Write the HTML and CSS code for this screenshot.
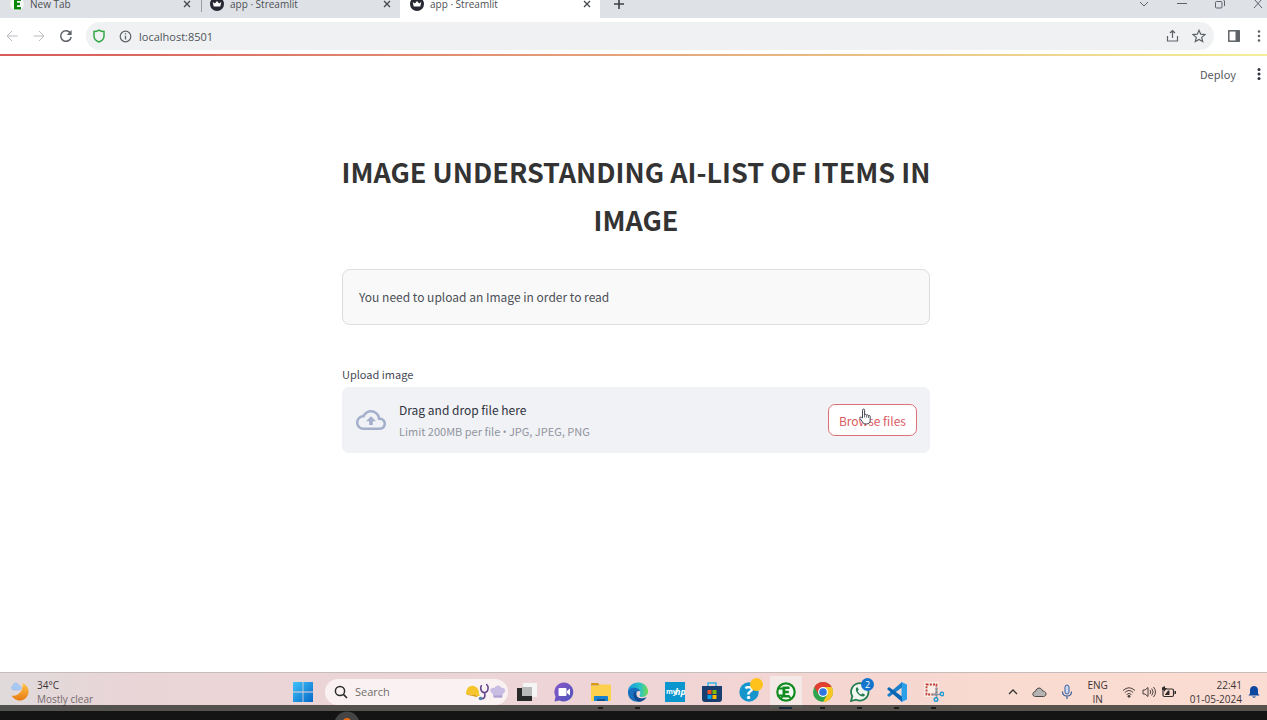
FILE: index.html
```html
<!DOCTYPE html>
<html lang="en">
<head>
<meta charset="utf-8">
<meta name="viewport" content="width=device-width, initial-scale=1">
<title>app · Streamlit</title>
<link rel="stylesheet" href="styles.css">
</head>
<body>
<header class="browser">
  <div class="tabstrip">
    <div class="tab">
      <svg class="favicon" viewBox="0 0 14 14"><circle cx="7" cy="7" r="6.8" fill="#f4fbf4"/><path d="M4 1.500h7v2.600H7v1.600h3v2.600H7v1.600h4v2.600H4z" fill="#0c870c"/></svg>
      <span class="tab-title">New Tab</span>
      <button class="tab-close" aria-label="Close New Tab"><svg viewBox="0 0 8 8"><path d="M1 1l6 6M7 1l-6 6"/></svg></button>
    </div>
    <div class="tab tab-divided">
      <svg class="favicon" viewBox="0 0 14 14"><circle cx="7" cy="7" r="7" fill="#262730"/><path d="M2.700 5l2.200 1.500L7 4l2.100 2.500L11.300 5l-1 4.500H3.700z" fill="#fff"/></svg>
      <span class="tab-title">app · Streamlit</span>
      <button class="tab-close" aria-label="Close app"><svg viewBox="0 0 8 8"><path d="M1 1l6 6M7 1l-6 6"/></svg></button>
    </div>
    <div class="tab tab-active">
      <svg class="favicon" viewBox="0 0 14 14"><circle cx="7" cy="7" r="7" fill="#262730"/><path d="M2.700 5l2.200 1.500L7 4l2.100 2.500L11.300 5l-1 4.500H3.700z" fill="#fff"/></svg>
      <span class="tab-title">app · Streamlit</span>
      <button class="tab-close" aria-label="Close current tab"><svg viewBox="0 0 8 8"><path d="M1 1l6 6M7 1l-6 6"/></svg></button>
    </div>
    <button class="new-tab" aria-label="New tab"><svg width="10" height="10" viewBox="0 0 10 10"><path d="M5 0v10M0 5h10"/></svg></button>
    <div class="window-controls">
      <button aria-label="Search tabs"><svg width="10" height="10" viewBox="0 0 10 10"><path d="M1 3l4 4 4-4"/></svg></button>
      <button aria-label="Minimize"><svg width="10" height="10" viewBox="0 0 10 10"><path d="M0 4.500h10"/></svg></button>
      <button aria-label="Restore"><svg width="10" height="10" viewBox="0 0 10 10"><rect x=".5" y="2.500" width="6.500" height="6.500" rx="1"/><path d="M3 .5h5l1.500 1.500v5"/></svg></button>
      <button aria-label="Close window"><svg width="10" height="10" viewBox="0 0 10 10"><path d="M1 0l8 9M9 0L1 9"/></svg></button>
    </div>
  </div>
  <div class="toolbar">
    <button class="tool faded" aria-label="Back"><svg width="12" height="12" viewBox="0 0 12 12"><path d="M11.500 6H1M6 1L1 6l5 5"/></svg></button>
    <button class="tool faded" aria-label="Forward"><svg width="12" height="12" viewBox="0 0 12 12"><path d="M.5 6H11M6 1l5 5-5 5"/></svg></button>
    <button class="tool" aria-label="Reload"><svg width="14" height="14" viewBox="0 0 14 14"><path d="M11.500 4.200A5.300 5.300 0 1 0 12.200 8" stroke-width="1.500"/><path d="M12.600 1v5H7.800z" fill="#5f6368" stroke="none"/></svg></button>
    <div class="omnibox">
      <svg width="14" height="14" viewBox="0 0 14 14"><path d="M7 1.200C5.300 2.300 3.600 2.600 2 2.600V7c0 3 2.200 5 5 6 2.800-1 5-3 5-6V2.600C10.400 2.600 8.700 2.300 7 1.200z" stroke="#35a845" stroke-width="1.500"/></svg>
      <svg width="13" height="13" viewBox="0 0 13 13"><circle cx="6.500" cy="6.500" r="5.300" stroke-width="1.200"/><path d="M6.500 5.700v3.700M6.500 3.300v1.300" stroke-width="1.300"/></svg>
      <input class="address" aria-label="Address" value="localhost:8501">
      <button class="tool" aria-label="Share"><svg width="13" height="14" viewBox="0 0 13 14"><path d="M6.500 9V1.700M4 4l2.500-2.500L9 4M1.500 7v5h10V7" stroke-width="1.200"/></svg></button>
      <button class="tool" aria-label="Bookmark"><svg width="14" height="14" viewBox="0 0 14 14"><path d="M7 1.300l1.700 3.900 4.200.4-3.200 2.800 1 4.200L7 10.400l-3.700 2.200 1-4.200L1.100 5.600l4.200-.4z" stroke-width="1.200"/></svg></button>
    </div>
    <button class="tool" aria-label="Side panel"><svg width="12" height="12" viewBox="0 0 12 12"><rect x=".8" y=".8" width="10.400" height="10.400" stroke-width="1.500"/><path d="M7.500 1h4v10h-4z" fill="#5f6368" stroke="none"/></svg></button>
    <button class="tool" aria-label="Browser menu"><svg width="4" height="14" viewBox="0 0 4 14"><g fill="#5f6368" stroke="none"><circle cx="2" cy="2.500" r="1.300"/><circle cx="2" cy="7" r="1.300"/><circle cx="2" cy="11.500" r="1.300"/></g></svg></button>
  </div>
</header>

<main class="app">
  <div class="decoration"></div>
  <div class="app-header">
    <button class="deploy">Deploy</button>
    <button class="app-menu" aria-label="App menu"><svg width="4" height="14" viewBox="0 0 4 14"><g fill="#31333f"><circle cx="2" cy="2.500" r="1.500"/><circle cx="2" cy="7" r="1.500"/><circle cx="2" cy="11.500" r="1.500"/></g></svg></button>
  </div>
  <div class="content">
    <h1>IMAGE UNDERSTANDING AI-LIST OF ITEMS IN IMAGE</h1>
    <p class="notice">You need to upload an Image in order to read</p>
    <p class="field-label" id="upload-label">Upload image</p>
    <section class="dropzone" aria-labelledby="upload-label">
      <svg class="cloud" viewBox="0 0 24 24"><path fill="#a3afcb" d="M19.350 10.040A7.490 7.490 0 0 0 12 4C9.110 4 6.600 5.640 5.350 8.040A5.994 5.994 0 0 0 0 14c0 3.310 2.690 6 6 6h13c2.760 0 5-2.240 5-5 0-2.640-2.050-4.780-4.650-4.960zM19 18H6c-2.210 0-4-1.790-4-4s1.790-4 4-4h.710C7.370 7.690 9.480 6 12 6c3.040 0 5.500 2.460 5.500 5.500v.5H19c1.660 0 3 1.340 3 3s-1.340 3-3 3zM8 13h2.550v3h2.900v-3H16l-4-4z"/></svg>
      <div class="drop-text">
        <span class="drop-title">Drag and drop file here</span>
        <small>Limit 200MB per file <span class="bullet">•</span> JPG, JPEG, PNG</small>
      </div>
      <button class="browse">Browse files
        <svg class="pointer" viewBox="0 0 12 17"><path d="M3.500 10V2.200C3.500.6 5.600.6 5.600 2.200V7c.3-1 1.900-.8 2 .3.400-.9 1.800-.6 1.900.5.500-.7 1.700-.4 1.700.8V12c0 2.500-1.200 4-4 4-2.200 0-3-.8-3.900-2.300L.9 10.300c-.5-1 .8-1.700 1.500-1z" fill="#fff" stroke="#44464f"/><path d="M5.600 7v2.500M7.600 7.500v2M9.500 8v2" stroke="#44464f" stroke-width=".8"/></svg>
      </button>
    </section>
  </div>
</main>

<footer>
  <div class="taskbar">
    <div class="weather">
      <svg width="20" height="20" viewBox="0 0 20 20"><defs><linearGradient id="moon" x2="0" y2="1"><stop stop-color="#ffc64a"/><stop offset="1" stop-color="#e87a12"/></linearGradient></defs><path d="M12.500 1a9 9 0 1 1-11 12.500C8 15 13.500 9 12.500 1z" fill="url(#moon)"/><path d="M3 8a2.500 2.500 0 0 1 0-4.500C4 0 8 0 8.500 3.500 12 3.500 12 8 8.500 8z" fill="#a9c9f5" stroke="#8aaee6" stroke-width=".5"/></svg>
      <div class="weather-text"><span>34°C</span><span class="muted">Mostly clear</span></div>
    </div>
    <div class="task-center">
      <button class="task" aria-label="Start"><svg width="20" height="20" viewBox="0 0 20 20"><defs><linearGradient id="win" x2="1" y2="1"><stop stop-color="#3fc3fa"/><stop offset="1" stop-color="#0668c9"/></linearGradient></defs><path d="M0 0h9.600v9.600H0zM10.400 0H20v9.600h-9.600zM0 10.400h9.600V20H0zM10.400 10.400H20V20h-9.600z" fill="url(#win)"/></svg></button>
      <div class="search">
        <svg width="14" height="14" viewBox="0 0 14 14"><circle cx="6" cy="6" r="4.600" fill="none" stroke="#2b2b2b" stroke-width="1.500"/><path d="M9.400 9.400L13 13" stroke="#2b2b2b" stroke-width="1.700"/></svg>
        <input aria-label="Search" placeholder="Search">
        <svg width="40" height="18" viewBox="0 0 40 18"><path d="M1 11C1 3 7 1 11 4c3 2 3 5 3 7l1 1.500-2 .8C9 11 5 12 1 11z" fill="#f6c52c"/><path d="M1 11c4 1 8 0 12 2.300l-2 .7C7 12 3 13 1 11z" fill="#d99b13"/><path d="M17 2.500c-2 0-2 7 2.500 7s4.500-8 1.500-8M19.500 9.500c1.500 6-1.500 6.500-3.500 6" fill="none" stroke="#65458c" stroke-width="1.600"/><circle cx="15.500" cy="15.500" r="1.800" fill="#5384ad"/><path d="M27.500 10.500c-5-3-1-7 2-5.500 1-3.500 6-3.500 7 0 4-1 5 4 1.500 5.500l-1 4h-8z" fill="#c9bde4"/><path d="M28 12.500h9.500l-.5 2h-8z" fill="#ad9ecd"/></svg>
      </div>
      <button class="task" aria-label="Task view"><svg width="20" height="20" viewBox="0 0 20 20"><path d="M6 1h14v14H6z" fill="#f5f5f5"/><path d="M0 6h15v13H0z" fill="#292929"/><path d="M5 5h10v9H5z" fill="#b9b9b9"/></svg></button>
      <button class="task" aria-label="Chat"><svg width="20" height="20" viewBox="0 0 20 20"><defs><linearGradient id="chat" x2="1" y2="1"><stop stop-color="#8a58c9"/><stop offset="1" stop-color="#4b53bd"/></linearGradient></defs><path d="M10 .5a9.500 9.500 0 1 1-4.500 18L.5 19.500l1-5A9.500 9.500 0 0 1 10 .5z" fill="url(#chat)"/><rect x="4.500" y="6" width="8" height="8" rx="1" fill="#fff"/><path d="M13 9l3-2.500v7L13 11z" fill="#fff"/></svg></button>
      <button class="task running" aria-label="File Explorer"><svg width="20" height="20" viewBox="0 0 20 20"><path d="M0 2q0-1 1-1h6l2 2.500H0z" fill="#d89a16"/><path d="M0 4h7l2-1.500h10q1 0 1 1V18q0 1-1 1H0z" fill="#fcd04c"/><path d="M3 19v-4q0-1 1-1h12q1 0 1 1v4z" fill="#1581cf"/><path d="M6 17h8v2H6z" fill="#0d518f"/></svg></button>
      <button class="task running" aria-label="Edge"><svg width="20" height="20" viewBox="0 0 20 20"><defs><linearGradient id="edge" x2="1"><stop stop-color="#1698dc"/><stop offset=".6" stop-color="#2bc3c6"/><stop offset="1" stop-color="#72dd4c"/></linearGradient></defs><path d="M0 9C1-1 17-3 20 8c1 5-3 7-6 7-2 0-3-1-2-3 2-5-7-7-12-3z" fill="url(#edge)"/><path d="M0 9c1-4 11-5 12.300.5C10 8 8 10 8.500 13c.5 4 6 5 10 2C13 23-1 21 0 9z" fill="#176fbd"/><path d="M7 9c-3 4-1 9 4 10.800 3 0 6-2 7.500-4.800-5 3-11 1-10.500-4z" fill="#104a91"/></svg></button>
      <button class="task" aria-label="myHP"><svg width="20" height="20" viewBox="0 0 20 20"><path d="M0 0h20v20H0z" fill="#0b96cf"/><text x="1" y="12" class="hp-small">my</text><text x="10" y="13" class="hp-large">hp</text></svg></button>
      <button class="task" aria-label="Microsoft Store"><svg width="20" height="20" viewBox="0 0 20 20"><path d="M6 5V1h8v4" fill="none" stroke="#37b4e8" stroke-width="1.500"/><path d="M0 4h20v13q0 3-3 3H3q-3 0-3-3z" fill="#193f70"/><path d="M5.500 8h4v4h-4z" fill="#f25022"/><path d="M10.500 8h4v4h-4z" fill="#7fba00"/><path d="M5.500 13h4v4h-4z" fill="#00a4ef"/><path d="M10.500 13h4v4h-4z" fill="#ffb900"/></svg></button>
      <button class="task" aria-label="Help"><svg width="20" height="20" viewBox="0 0 20 20"><circle cx="10" cy="10" r="9.700" fill="#1695cc"/><text x="10" y="17" text-anchor="middle" class="question">?</text></svg><span class="badge badge-yellow"></span></button>
      <button class="task task-active" aria-label="Recorder"><svg width="20" height="20" viewBox="0 0 20 20"><circle cx="10" cy="10" r="8.700" fill="#f4fbf4" stroke="#128b20" stroke-width="2.200"/><path d="M3 6.500h4M3 13.500h4l-2 3M13 14l2 3" fill="none" stroke="#128b20" stroke-width="1.800"/><path d="M6.500 4.500h7V7H9.300v1.800h3.500v2.500H9.300V13h4.200v2.500h-7z" fill="#128b20"/></svg></button>
      <button class="task running" aria-label="Chrome"><svg width="20" height="20" viewBox="0 0 20 20"><circle cx="10" cy="10" r="10" fill="#2da44e"/><path d="M1.340 5A10 10 0 0 1 18.660 5H10L5.700 12.500z" fill="#e23e32"/><path d="M18.660 5A10 10 0 0 1 10 20l4.300-7.500L10 5z" fill="#fbc823"/><circle cx="10" cy="10" r="4.900" fill="#fff"/><circle cx="10" cy="10" r="3.800" fill="#2f76e0"/></svg></button>
      <button class="task running" aria-label="WhatsApp, 2 notifications"><svg width="20" height="20" viewBox="0 0 20 20"><path d="M1 19l1.300-4.700A8.700 8.700 0 1 1 6 17.700z" fill="#f3f7f2" stroke="#237d50" stroke-width="1.800"/><path d="M6.500 5.500C4 8 9 15 13.500 14.500c2-1 1.500-2 .5-2.500l-1.500-.8-1.200 1.300C9.500 12 8 10.200 7.700 9l1-1.300-.8-2q-.4-.8-1.400-.2z" fill="#237d50"/></svg><span class="badge badge-blue">2</span></button>
      <button class="task running" aria-label="Visual Studio Code"><svg width="20" height="20" viewBox="0 0 20 20"><path d="M14.500 0L20 2.500v15L14.500 20z" fill="#2b9fe8"/><path d="M15 0L0 13l2 2L15 5.500z" fill="#1c7fc9"/><path d="M15 20L0 7l2-2 13 9.500z" fill="#0a66b5"/></svg></button>
      <button class="task running" aria-label="Snipping Tool"><svg width="20" height="20" viewBox="0 0 20 20"><rect width="15" height="15" rx="1" fill="#f8ece7"/><path d="M2.500 2.500h10v10h-10z" fill="none" stroke="#c23b2e" stroke-width="1.800" stroke-dasharray="2 1.300"/><path d="M12.500 5.500V16M8 12.500h9" stroke="#85939c" stroke-width="1.700"/><circle cx="12" cy="17.500" r="1.800" fill="none" stroke="#209bd6" stroke-width="1.400"/><circle cx="18" cy="12" r="1.700" fill="none" stroke="#209bd6" stroke-width="1.400"/></svg></button>
    </div>
    <div class="tray">
      <svg width="10" height="10" viewBox="0 0 10 10"><path d="M1 7l4-4 4 4" fill="none" stroke="#333" stroke-width="1.300"/></svg>
      <svg width="15" height="12" viewBox="0 0 15 12"><path d="M3.500 10.500c-4 0-3-5 0-5C4.500 1 9.500 1 10.500 5c4.500 0 4.500 5.500 1 5.500z" fill="#b5b3b2" stroke="#494645"/></svg>
      <svg width="12" height="16" viewBox="0 0 12 16"><rect x="4" y="1" width="4" height="9" rx="2" fill="#cbd8ef" stroke="#385f9e"/><path d="M1.500 7.500c0 6 9 6 9 0M6 12v3" fill="none" stroke="#385f9e" stroke-width="1.200"/></svg>
      <div class="language"><span>ENG</span><span>IN</span></div>
      <div class="status">
        <svg width="14" height="12" viewBox="0 0 14 12"><path d="M1 4.500q6-5.500 12 0M2.800 6.500q4.200-4 8.400 0M4.600 8.500q2.400-2.200 4.800 0" fill="none" stroke="#4a403d"/><circle cx="7" cy="10.300" r="1.400" fill="#4a403d"/></svg>
        <svg width="14" height="12" viewBox="0 0 14 12"><path d="M1 4h2l3-2.500v9L3 8H1zM8 4q1.500 2 0 4M9.700 2.500q3 3.500 0 7M11.500 1q4 5 0 10" fill="none" stroke="#4a403d"/></svg>
        <svg width="14" height="12" viewBox="0 0 14 12"><rect x="1" y="3" width="10.500" height="7.500" rx="1.500" fill="none" stroke="#322c2a" stroke-width="1.200"/><path d="M3 8.500L6 4.500h1.500v4.500H3zM12.500 5H14v3h-1.500zM0 1.500L3 0v2h2L2 6V4H0z" fill="#322c2a"/></svg>
      </div>
      <div class="clock"><time>22:41</time><time>01-05-2024</time></div>
      <svg width="12" height="14" viewBox="0 0 12 14"><path d="M.5 10.500L2 8.500V5c0-5.300 8-5.300 8 0v3.500l1.500 2zM4 11.500h4q-2 2.500-4 0z" fill="#0d48a0"/></svg>
    </div>
  </div>
  <div class="frame-edge"><svg width="26" height="9" viewBox="0 0 26 9"><circle cx="13" cy="13" r="12.500" fill="#444"/><circle cx="13" cy="11" r="4" fill="#ec6b0c"/></svg></div>
</footer>
</body>
</html>
```
FILE: styles.css
```css
* { box-sizing: border-box; }
body {
  margin: 0;
  min-height: 100vh;
  display: flex;
  flex-direction: column;
  background: #fff;
  color: #31333f;
  font-family: "Noto Sans CJK SC", sans-serif;
}
button, input { font: inherit; color: inherit; border: 0; padding: 0; background: none; }
svg { display: block; flex: none; }
button { display: flex; align-items: center; justify-content: center; }

/* Browser chrome */
.browser { font-family: "Open Sans", sans-serif; color: #5f6368; }
.browser svg { fill: none; stroke: #5f6368; }
.tabstrip { height: 18px; display: flex; align-items: flex-end; overflow: hidden; background: #dee1e6; }
.tab { width: 200px; height: 28px; padding: 0 8px 0 10px; display: flex; align-items: center; gap: 6px; font-size: 10px; line-height: 8px; color: #4c4f54; }
.tab-divided { padding-left: 1px; }
.tab-divided::before { content: ""; width: 1px; height: 16px; margin-right: -7px; background: #9a9da2; }
.tab-divided .favicon { margin-left: 9px; }
.tab-active { background: #fff; }
.browser .favicon { width: 14px; height: 14px; stroke: none; }
.tab-title { flex: 1; }
.tab-close { width: 10px; height: 10px; }
.tab-close svg { width: 8px; height: 8px; stroke: #44474b; stroke-width: 1.3; }
.new-tab { width: 38px; height: 28px; }
.new-tab svg { stroke: #3c4043; stroke-width: 1.6; }
.window-controls { margin-left: auto; display: flex; gap: 28px; padding-right: 4px; height: 28px; }
.toolbar { height: 36px; padding: 0 6px 0 5px; display: flex; align-items: center; gap: 13px; }
.toolbar .tool { min-width: 14px; height: 24px; }
.toolbar .tool:last-child { min-width: 4px; }
.toolbar > .tool:last-child { margin-left: 3px; }
.toolbar .faded svg { stroke: #b8babd; }
.omnibox { flex: 1; height: 28px; padding: 0 8px 0 6px; display: flex; align-items: center; gap: 13px; border-radius: 14px; background: #eff1f3; }
.address { flex: 1; min-width: 0; font-size: 11px; margin-left: -6px; color: #50555a; }

/* App page */
.app { flex: 1; }
.decoration { height: 2px; background: linear-gradient(90deg, #d65a5a, #f3ef9a); }
.app-header { height: 36px; padding: 0 6px; display: flex; justify-content: flex-end; align-items: center; gap: 21px; }
.deploy { font-size: 11px; color: #555761; }
.content { width: 593px; max-width: 100%; margin: 0 auto; padding: 56px 0 24px 5px; }
h1 { margin: 0 -4px; font-size: 27px; line-height: 48px; font-weight: 700; text-align: center; color: #333; }
.notice { margin: 25px 0 40px; padding: 17px 16px; border: 1px solid #ddd; border-radius: 8px; background: #f9f9f9; font-size: 12px; line-height: 20px; color: #4c4f57; }
.field-label { margin: 0 0 4px; font-size: 11px; line-height: 18px; color: #484a55; }
.dropzone { min-height: 66px; padding: 8px 13px 8px 14px; display: flex; align-items: center; gap: 13px; border-radius: 7px; background: #f0f2f6; }
.cloud { width: 30px; height: 30px; }
.drop-text { flex: 1; display: flex; flex-direction: column; }
.drop-title { font-size: 12px; line-height: 22px; }
small { font-size: 11px; line-height: 20px; color: #92949f; }
.bullet { font: 10px/10px "Open Sans", sans-serif; }
.browse { position: relative; height: 32px; padding: 0 10px; border: 1px solid #e07078; border-radius: 7px; background: #fff; font-size: 12px; color: #da5c64; }
.pointer { position: absolute; left: 30px; top: 3px; width: 12px; height: 17px; fill: none; }

/* Taskbar */
footer { font-family: "Open Sans", sans-serif; }
.taskbar { position: relative; height: 39px; display: grid; grid-template-columns: 284px auto 1fr; align-items: center; border-top: 1px solid #c5bcbc; background: linear-gradient(90deg, #e0dadb, #e9d5d7 10%, #efd4d6 50%, #f5d6d1 68%, #fadbd0 80%, #fadcd2); color: #3b3535; font-size: 10px; line-height: 14px; }
.taskbar::after { content: ""; position: absolute; inset: auto 0 0; height: 6px; background: #1a1e1a; opacity: .72; }
.weather { display: flex; align-items: center; gap: 7px; padding-left: 10px; }
.weather-text, .language, .clock { display: flex; flex-direction: column; }
.muted { color: #756a6b; }
.task-center { display: flex; align-items: center; }
.task { position: relative; width: 37px; height: 34px; }
.search { width: 183px; height: 26px; margin: 0 0 0 4px; padding: 0 3px 0 9px; display: flex; align-items: center; gap: 7px; border-radius: 13px; background: #faf2f2; font-size: 11px; }
.search input { flex: 1; min-width: 0; }
.search input::placeholder { color: #736c6c; opacity: 1; }
.task-active { background: linear-gradient(#f5e9e8, #f5e9e8) center / 32px 32px no-repeat; }
.running::after, .task-active::after { content: ""; position: absolute; bottom: 0; left: 16px; width: 5px; height: 2px; background: #222; }
.task-active::after { left: 12px; width: 13px; background: #084a90; }
.badge { position: absolute; top: 3px; right: 4px; width: 13px; height: 13px; border-radius: 50%; font-size: 9px; line-height: 13px; color: #fff; }
.badge-yellow { background: #ffc21c; }
.badge-blue { background: #1474cd; }
.hp-small { font: bold 7px "Open Sans", sans-serif; fill: #fff; }
.hp-large { font: italic bold 9px "Open Sans", sans-serif; fill: #fff; }
.question { font: bold 18px "Open Sans", sans-serif; fill: #fff; }
.tray { display: flex; align-items: center; justify-content: flex-end; gap: 14px; padding-right: 7px; }
.language { align-items: center; }
.status { display: flex; gap: 6px; }
.clock { align-items: flex-end; margin-right: -8px; }
.frame-edge { height: 9px; padding-left: 334px; background: #141414; }
```
